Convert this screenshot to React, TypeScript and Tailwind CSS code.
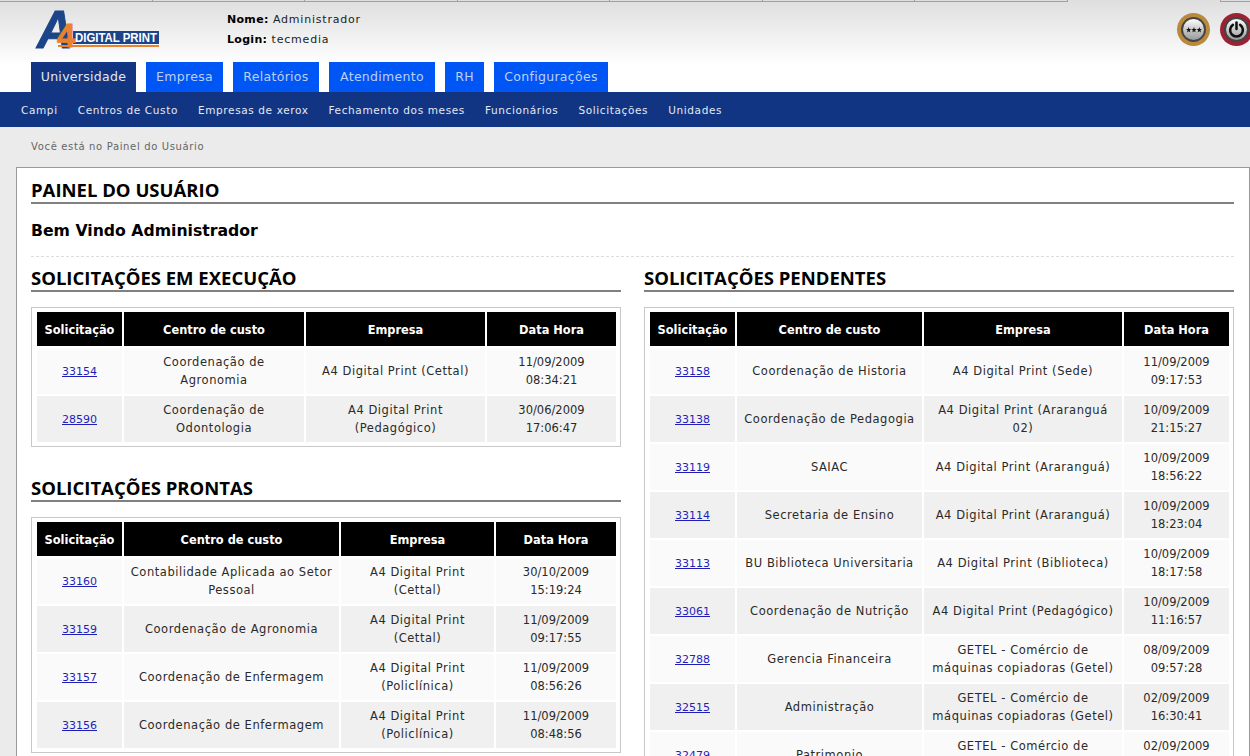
const font = "font-['DejaVu_Sans',sans-serif]";

const menu = [
  { label: "Universidade", width: "w-[105px]" },
  { label: "Empresa", width: "w-[77px]" },
  { label: "Relatórios", width: "w-[86px]" },
  { label: "Atendimento", width: "w-[106px]" },
  { label: "RH", width: "w-[39px]" },
  { label: "Configurações", width: "w-[114px]" },
];
const submenu = ["Campi", "Centros de Custo", "Empresas de xerox", "Fechamento dos meses", "Funcionários", "Solicitações", "Unidades"];

type Row = [string, string, string, string, string];

const execucao: Row[] = [
  ["33154", "Coordenação de Agronomia", "A4 Digital Print (Cettal)", "11/09/2009", "08:34:21"],
  ["28590", "Coordenação de Odontologia", "A4 Digital Print (Pedagógico)", "30/06/2009", "17:06:47"],
];

const prontas: Row[] = [
  ["33160", "Contabilidade Aplicada ao Setor Pessoal", "A4 Digital Print (Cettal)", "30/10/2009", "15:19:24"],
  ["33159", "Coordenação de Agronomia", "A4 Digital Print (Cettal)", "11/09/2009", "09:17:55"],
  ["33157", "Coordenação de Enfermagem", "A4 Digital Print (Policlínica)", "11/09/2009", "08:56:26"],
  ["33156", "Coordenação de Enfermagem", "A4 Digital Print (Policlínica)", "11/09/2009", "08:48:56"],
];

const pendentes: Row[] = [
  ["33158", "Coordenação de Historia", "A4 Digital Print (Sede)", "11/09/2009", "09:17:53"],
  ["33138", "Coordenação de Pedagogia", "A4 Digital Print (Araranguá 02)", "10/09/2009", "21:15:27"],
  ["33119", "SAIAC", "A4 Digital Print (Araranguá)", "10/09/2009", "18:56:22"],
  ["33114", "Secretaria de Ensino", "A4 Digital Print (Araranguá)", "10/09/2009", "18:23:04"],
  ["33113", "BU Biblioteca Universitaria", "A4 Digital Print (Biblioteca)", "10/09/2009", "18:17:58"],
  ["33061", "Coordenação de Nutrição", "A4 Digital Print (Pedagógico)", "10/09/2009", "11:16:57"],
  ["32788", "Gerencia Financeira", "GETEL - Comércio de máquinas copiadoras (Getel)", "08/09/2009", "09:57:28"],
  ["32515", "Administração", "GETEL - Comércio de máquinas copiadoras (Getel)", "02/09/2009", "16:30:41"],
  ["32479", "Patrimonio", "GETEL - Comércio de máquinas copiadoras (Getel)", "02/09/2009", "15:12:09"],
];

function Logo() {
  return (
    <svg width="124" height="40" viewBox="0 0 124 40" className="shrink-0 overflow-visible">
      <text x="0" y="38" fontFamily="Liberation Sans" fontWeight="700" fontStyle="italic" fontSize="53" fill="#1c4488" stroke="#1c4488" strokeWidth="1" textLength="36" lengthAdjust="spacingAndGlyphs">A</text>
      <rect x="36" y="21" width="86" height="13" fill="#1c4488" />
      <rect x="21" y="35" width="101" height="2" fill="#e8822f" />
      <text x="20" y="37" fontFamily="Liberation Sans" fontWeight="700" fontSize="33" fill="#e8822f" stroke="#e8822f" strokeWidth="0.8">4</text>
      <text x="38" y="32" fontFamily="Liberation Sans" fontWeight="700" fontSize="13.5" fill="#ffffff" textLength="82" lengthAdjust="spacingAndGlyphs">DIGITAL PRINT</text>
    </svg>
  );
}

function RoundButton({ ring, children }: { ring: string; children: React.ReactNode }) {
  return (
    <div className={`w-[33px] h-[33px] shrink-0 rounded-full ${ring} flex items-center justify-center`}>
      <div className="w-[25px] h-[25px] rounded-full border-2 border-[#444] bg-gradient-to-b from-white to-[#999] flex items-center justify-center">
        {children}
      </div>
    </div>
  );
}

function TopStrip() {
  return (
    <div className="h-[2px] flex">
      {[0, 1, 2, 3, 4, 5, 6].map((i) => (
        <div key={i} className="w-[152.5px] border-b border-r border-[#a89f92]" />
      ))}
      <div className="w-[152.5px]" />
      <div className="flex-1 border-b border-l border-[#a89f92]" />
    </div>
  );
}

function Header() {
  return (
    <div className="h-[92px] bg-gradient-to-b from-[#dedede] to-white to-[70%] flex flex-col">
      <TopStrip />
      <div className="h-[60px] flex items-start">
        <div className="ml-[37px] mt-[8px]"><Logo /></div>
        <div className={`ml-[66px] mt-[8px] text-[11px] tracking-[0.8px] leading-[20px] text-[#222] ${font}`}>
          <div><b className="text-black tracking-[0.3px]">Nome:</b> Administrador</div>
          <div><b className="text-black tracking-[0.3px]">Login:</b> tecmedia</div>
        </div>
        <div className="ml-auto mt-[11px] mr-[-3px] flex gap-[10px]">
          <RoundButton ring="bg-[#b98a3c]">
            <svg width="16" height="6" viewBox="0 0 16 6" fill="#111">
              <polygon points="2.7,0 3.4,2 5.4,2 3.8,3.3 4.4,5.5 2.7,4.2 1,5.5 1.6,3.3 0,2 2,2" />
              <polygon points="8,0 8.7,2 10.7,2 9.1,3.3 9.7,5.5 8,4.2 6.3,5.5 6.9,3.3 5.3,2 7.3,2" />
              <polygon points="13.3,0 14,2 16,2 14.4,3.3 15,5.5 13.3,4.2 11.6,5.5 12.2,3.3 10.6,2 12.6,2" />
            </svg>
          </RoundButton>
          <RoundButton ring="bg-[#9c2233]">
            <svg width="17" height="17" viewBox="0 0 16 16" fill="none" stroke="#111" strokeWidth="2.4" strokeLinecap="round">
              <path d="M4.6 3.6a6 6 0 1 0 6.8 0" />
              <path d="M8 1.5v6" />
            </svg>
          </RoundButton>
        </div>
      </div>
      <div className={`flex gap-[10px] pl-[31px] text-[12.5px] tracking-[0.3px] ${font}`}>
        {menu.map((m, i) => (
          <div
            key={m.label}
            className={`h-[30px] ${m.width} flex items-center justify-center ${i === 0 ? "bg-[#113582] text-[#e4e8f2]" : "bg-[#0055f5] text-[#bcd0f5]"}`}
          >
            {m.label}
          </div>
        ))}
      </div>
    </div>
  );
}

function Title({ text, className = "" }: { text: string; className?: string }) {
  return (
    <h2 className={`text-[18.5px] leading-[24px] font-bold text-black border-b-2 border-[#808080] font-['Open_Sans',sans-serif] ${className}`}>
      {text}
    </h2>
  );
}

function DataTable({ rows, cols }: { rows: Row[]; cols: string[] }) {
  return (
    <div className="border border-[#c8c8c8] pt-[2px] pb-[2px] pl-[3px] pr-[2px] bg-white">
      <table className={`w-full table-fixed border-separate border-spacing-[2px] text-[11.5px] tracking-[0.55px] leading-[18px] text-[#2a2a2a] ${font}`}>
        <colgroup>
          {cols.map((c, i) => <col key={i} className={c} />)}
        </colgroup>
        <thead>
          <tr>
            {["Solicitação", "Centro de custo", "Empresa", "Data Hora"].map((h) => (
              <th key={h} className="bg-black text-white font-bold h-[34px] text-center pt-[1px] text-[11.4px] tracking-normal">{h}</th>
            ))}
          </tr>
        </thead>
        <tbody>
          {rows.map((r, i) => (
            <tr key={r[0]} className={i % 2 === 0 ? "bg-[#fafafa]" : "bg-[#f0f0f0]"}>
              <td className="h-[46px] text-center pt-[1px] text-[11px] tracking-normal"><a href="#" className="text-[#1f1fb8] underline">{r[0]}</a></td>
              <td className="text-center px-[5px]">{r[1]}</td>
              <td className="text-center px-[5px]">{r[2]}</td>
              <td className="text-center tracking-normal">{r[3]}<br />{r[4]}</td>
            </tr>
          ))}
        </tbody>
      </table>
    </div>
  );
}

export default function App() {
  return (
    <div className="w-[1250px] h-[756px] overflow-hidden bg-[#ebebeb]">
      <Header />
      <div className={`h-[35px] bg-[#113582] flex items-center gap-[20px] pl-[21px] pt-[2px] text-[10.5px] tracking-[0.62px] text-[#e4e8f2] ${font}`}>
        {submenu.map((s) => <span key={s}>{s}</span>)}
      </div>
      <div className={`h-[40px] pl-[31px] pt-[11px] text-[10px] tracking-[0.65px] leading-[18px] text-[#666] ${font}`}>Você está no Painel do Usuário</div>
      <div className="ml-[16px] border border-[#999] bg-white pl-[14px] pr-[15px] pt-[10px] h-[700px]">
        <Title text="PAINEL DO USUÁRIO" />
        <h3 className={`mt-[15px] text-[15.7px] leading-[24px] font-bold text-black ${font}`}>Bem Vindo Administrador</h3>
        <div className="mt-[13px] border-t border-dashed border-[#ddd]" />
        <div className="mt-[9px] flex gap-[23px]">
          <div className="w-[590px] shrink-0">
            <Title text="SOLICITAÇÕES EM EXECUÇÃO" className="mb-[15px]" />
            <DataTable rows={execucao} cols={["w-[85px]", "w-[180px]", "w-[179px]", "w-[129px]"]} />
            <Title text="SOLICITAÇÕES PRONTAS" className="mt-[29px] mb-[15px]" />
            <DataTable rows={prontas} cols={["w-[85px]", "w-[215px]", "w-[153px]", "w-[120px]"]} />
          </div>
          <div className="w-[590px] shrink-0">
            <Title text="SOLICITAÇÕES PENDENTES" className="mb-[15px]" />
            <DataTable rows={pendentes} cols={["w-[85px]", "w-[185px]", "w-[198px]", "w-[105px]"]} />
          </div>
        </div>
      </div>
    </div>
  );
}
